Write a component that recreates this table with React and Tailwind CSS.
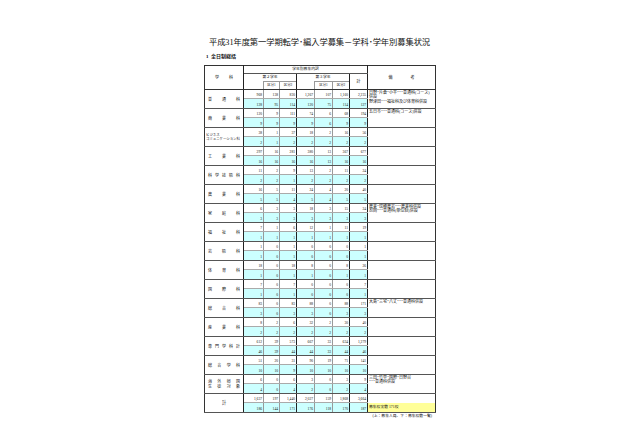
import React from "react";

const rows = [
  { label: ["普", "通", "科"], upper: ["968", "138", "830", "1,267", "107", "1,160", "2,235"], lower: ["128", "95", "114", "120", "75", "114", "127"], note: ["日野･片倉･小平･･･普通科(コース)", "併設", "野津田･･･福祉科及び体育科併設"] },
  { label: ["商", "業", "科"], upper: ["120", "9", "111", "74", "6", "68", "194"], lower: ["9", "9", "9", "9", "6", "9", "9"], note: ["五日市･･･普通科(コース)併設"] },
  { label: "biz", upper: ["38", "1", "37", "18", "2", "16", "56"], lower: ["2", "1", "2", "2", "2", "2", "2"], note: [] },
  { label: ["工", "業", "科"], upper: ["297", "16", "281", "380", "13", "367", "677"], lower: ["16", "16", "16", "16", "13", "16", "16"], note: [] },
  { label: ["科", "学", "技", "術", "科"], upper: ["11", "2", "9", "13", "2", "11", "24"], lower: ["2", "2", "1", "2", "2", "2", "2"], note: [] },
  { label: ["農", "業", "科"], upper: ["16", "5", "11", "24", "4", "20", "40"], lower: ["5", "5", "4", "5", "4", "5", "5"], note: [] },
  { label: ["家", "庭", "科"], upper: ["6", "3", "3", "18", "3", "15", "24"], lower: ["3", "3", "3", "3", "3", "3", "3"], note: ["農業･瑞穂農芸･･･農業科併設", "忍岡･･･普通科(単位制)併設"] },
  { label: ["福", "祉", "科"], upper: ["7", "1", "6", "12", "1", "11", "19"], lower: ["1", "1", "1", "1", "1", "1", "1"], note: [] },
  { label: ["芸", "術", "科"], upper: ["1", "0", "1", "0", "0", "0", "1"], lower: ["1", "0", "1", "0", "0", "0", "1"], note: [] },
  { label: ["体", "育", "科"], upper: ["18", "0", "18", "8", "0", "8", "26"], lower: ["1", "0", "1", "1", "0", "1", "1"], note: [] },
  { label: ["国", "際", "科"], upper: ["7", "0", "7", "0", "0", "0", "7"], lower: ["1", "0", "1", "0", "0", "0", "1"], note: [] },
  { label: ["総", "合", "科"], upper: ["83", "0", "83", "88", "0", "88", "171"], lower: ["3", "0", "3", "3", "0", "3", "3"], note: ["大島･三宅･八丈･･･普通科併設"] },
  { label: ["産", "業", "科"], upper: ["8", "2", "6", "32", "2", "30", "40"], lower: ["2", "2", "2", "2", "2", "2", "2"], note: [] },
  { label: ["専", "門", "学", "科", "計"], upper: ["612", "39", "573", "667", "33", "634", "1,279"], lower: ["46", "39", "44", "44", "33", "44", "46"], note: [] },
  { label: ["総", "合", "学", "科"], upper: ["51", "20", "31", "90", "19", "71", "141"], lower: ["10", "10", "9", "10", "10", "10", "10"], note: [] },
  { label: "kaigai", upper: ["6", "0", "6", "3", "0", "3", "9"], lower: ["4", "0", "4", "2", "0", "2", "4"], note: ["三田･竹早･国際･日野台", "･･･普通科併設"] },
];

const total = { upper: ["1,637", "197", "1,440", "2,027", "159", "1,868", "3,664"], lower: ["186", "144", "171", "176", "118", "170", "187"] };

const colRight = [
  "border-r border-r-[#999]",
  "border-r border-r-[#999]",
  "border-r border-r-[#222]",
  "border-r border-r-[#999]",
  "border-r border-r-[#999]",
  "border-r border-r-[#222]",
  "border-r border-r-[#222]",
];

function Label({ label }) {
  if (label === "biz") {
    return (
      <div className="overflow-hidden whitespace-nowrap pl-[1px] text-left text-[3.4px] leading-[4.4px]">
        <div>ビジネス</div>
        <div>コミュニケーション科</div>
      </div>
    );
  }
  if (label === "kaigai") {
    return (
      <div className="px-[3px] text-[4px] leading-[5px]">
        <div className="flex justify-between"><span>海</span><span>外</span><span>帰</span><span>国</span></div>
        <div className="flex justify-between"><span>生</span><span>徒</span><span>対</span><span>象</span></div>
      </div>
    );
  }
  return (
    <div className="flex justify-between px-[3px] text-[4px] leading-[5px]">
      {label.map((c, i) => (
        <span key={i}>{c}</span>
      ))}
    </div>
  );
}

function DataRow({ row, isTotal }) {
  return (
    <>
      <tr className="h-[9px]">
        <td rowSpan={2} className="border-r border-r-[#222] border-b border-b-[#555] align-middle">
          {isTotal ? <div className="text-center text-[4.2px]">計</div> : <Label label={row.label} />}
        </td>
        {row.upper.map((v, i) => (
          <td key={i} className={`${colRight[i]} border-b border-b-[#aaa] bg-white pr-[1px] text-right align-bottom text-[3.6px] leading-[5px]`}>
            {v}
          </td>
        ))}
        {isTotal ? (
          <td className="align-top" />
        ) : (
          <td rowSpan={2} className="border-b border-b-[#555] px-[1px] pt-[1px] align-top text-[4px] leading-[4.4px] whitespace-nowrap">
            {row.note.map((n, i) => (
              <div key={i}>{n}</div>
            ))}
          </td>
        )}
      </tr>
      <tr className="h-[10px]">
        {row.lower.map((v, i) => (
          <td key={i} className={`${colRight[i]} border-b border-b-[#555] bg-[#ccffff] pr-[1px] text-right align-bottom text-[3.6px] leading-[5px]`}>
            {v}
          </td>
        ))}
        {isTotal && (
          <td className="border-b border-b-[#555] bg-[#ffff99] px-[1px] align-middle text-[3.8px] leading-[5px] whitespace-nowrap">
            募集校実数 171校
          </td>
        )}
      </tr>
    </>
  );
}

export default function App() {
  return (
    <div
      className="relative h-[426px] w-[640px] overflow-hidden bg-white text-[#111]"
      style={{ fontFamily: '"Liberation Serif", "Noto Sans CJK JP", serif' }}
    >
      <div className="ml-[204px] w-[231px] pt-[38px]">
        <h1 className="whitespace-nowrap text-center text-[8.3px] leading-[10px] font-normal tracking-[-0.1px]">
          平成31年度第一学期転学･編入学募集－学科･学年別募集状況
        </h1>
        <div className="mt-[6px] pl-[2px] text-[5px] leading-[6px] font-bold">1&nbsp;&nbsp;全日制総括</div>
        <table className="mt-[5px] w-[231px] table-fixed border-collapse border border-[#333]">
          <colgroup>
            <col className="w-[39px]" />
            <col className="w-[20px]" />
            <col className="w-[16px]" />
            <col className="w-[17px]" />
            <col className="w-[18px]" />
            <col className="w-[18px]" />
            <col className="w-[17px]" />
            <col className="w-[18px]" />
            <col className="w-[68px]" />
          </colgroup>
          <thead className="text-[4px] font-normal leading-[5px]">
            <tr className="h-[8px]">
              <th rowSpan={3} className="border-r border-r-[#222] border-b border-b-[#333] font-normal">
                <div className="flex justify-center gap-[10px]"><span>学</span><span>科</span></div>
              </th>
              <th colSpan={7} className="border-r border-r-[#222] border-b border-b-[#555] font-normal text-[3.8px]">
                学年別募集内訳
              </th>
              <th rowSpan={3} className="border-b border-b-[#333] font-normal">
                <div className="flex justify-center gap-[18px]"><span>備</span><span>考</span></div>
              </th>
            </tr>
            <tr className="h-[8px]">
              <th colSpan={3} className="border-r border-r-[#222] font-normal text-[3.8px]">第２学年</th>
              <th colSpan={3} className="border-r border-r-[#222] font-normal text-[3.8px]">第３学年</th>
              <th rowSpan={2} className="border-r border-r-[#222] border-b border-b-[#333] font-normal">計</th>
            </tr>
            <tr className="h-[8px]">
              <th className="border-r border-r-[#999] border-b border-b-[#333]" />
              <th className="border-t border-t-[#999] border-r border-r-[#999] border-b border-b-[#333] font-normal text-[3.4px]">区分1</th>
              <th className="border-t border-t-[#999] border-r border-r-[#222] border-b border-b-[#333] font-normal text-[3.4px]">区分2</th>
              <th className="border-r border-r-[#999] border-b border-b-[#333]" />
              <th className="border-t border-t-[#999] border-r border-r-[#999] border-b border-b-[#333] font-normal text-[3.4px]">区分1</th>
              <th className="border-t border-t-[#999] border-r border-r-[#222] border-b border-b-[#333] font-normal text-[3.4px]">区分2</th>
            </tr>
          </thead>
          <tbody>
            {rows.map((r, i) => (
              <DataRow key={i} row={r} />
            ))}
            <DataRow row={total} isTotal />
          </tbody>
        </table>
        <div className="mt-[1px] pr-[3px] text-right text-[3.8px] leading-[5px] whitespace-nowrap">
          (上：募集人員、下：募集校数一覧)
        </div>
      </div>
    </div>
  );
}
